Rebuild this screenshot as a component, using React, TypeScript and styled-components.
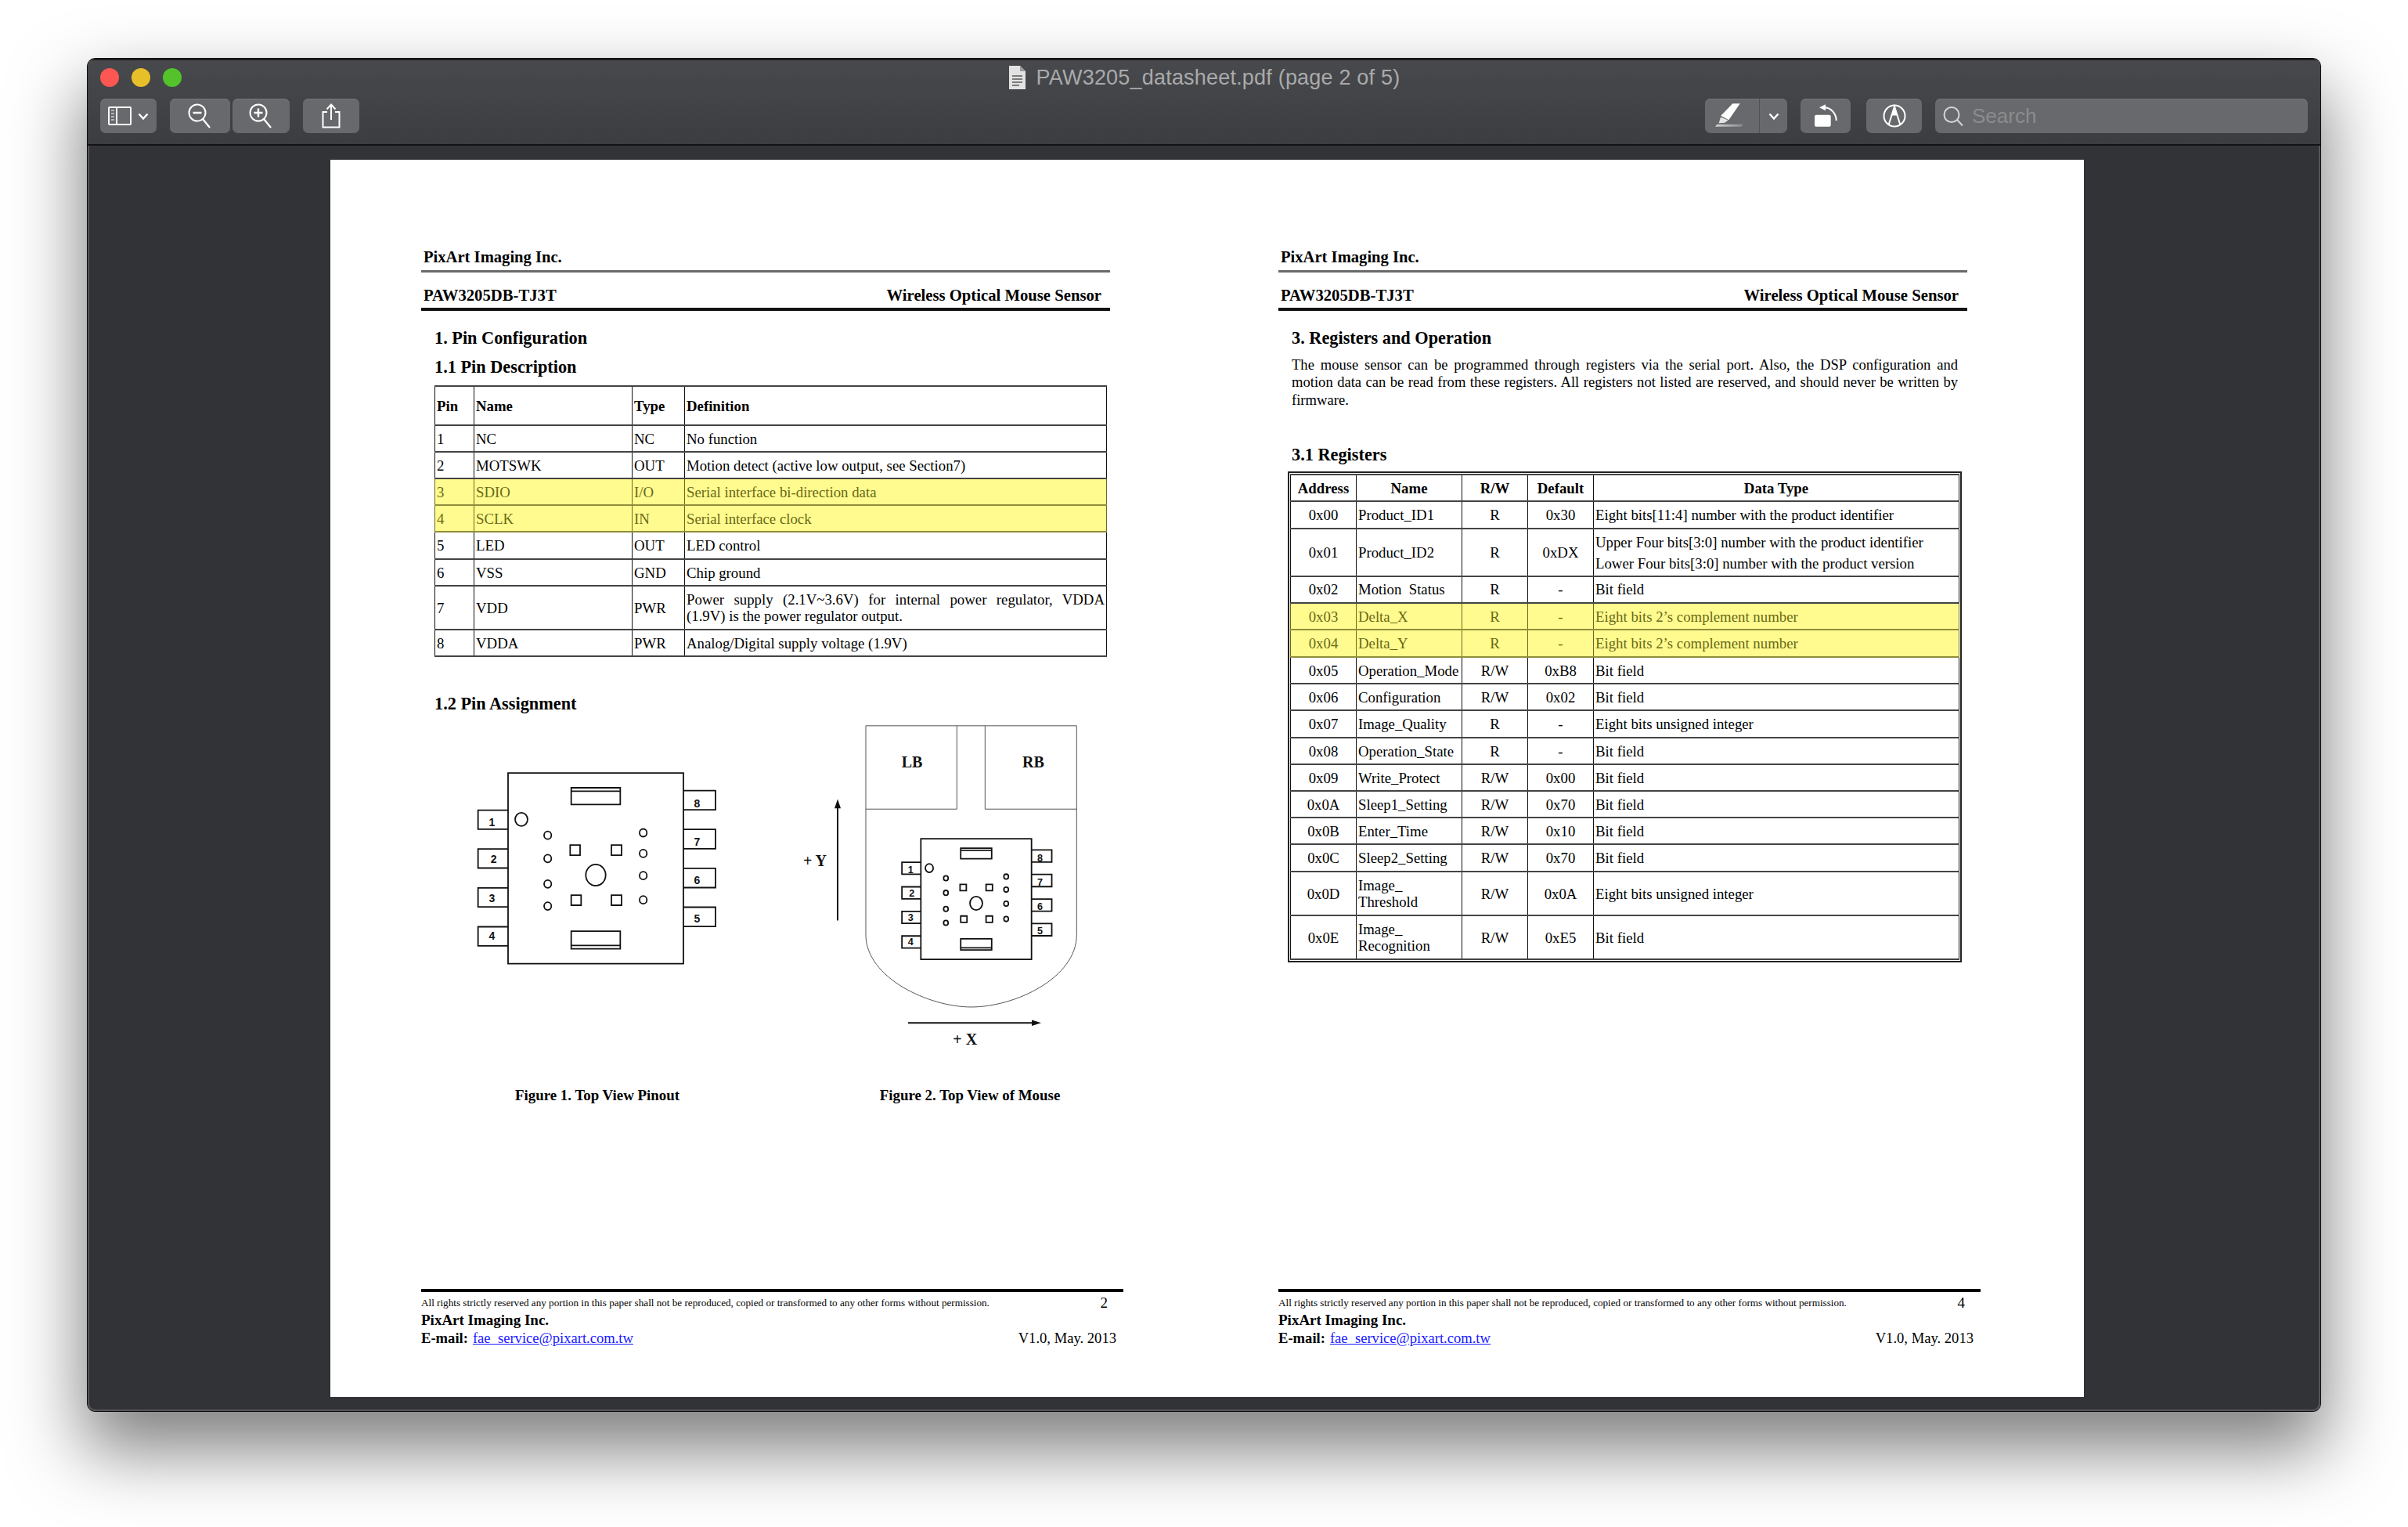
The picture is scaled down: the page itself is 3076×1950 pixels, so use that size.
import React from 'react'
import styled, { createGlobalStyle } from 'styled-components'

const GlobalStyle = createGlobalStyle`
  html, body { margin: 0; padding: 0; background: #fff; }
`

const Screen = styled.div`
  width: 3076px;
  height: 1950px;
  box-sizing: border-box;
  padding: 75px 112px 148px 112px;
  overflow: hidden;
  background: #fff;
`
const WindowShadow = styled.div`
  height: 100%;
  border-radius: 10px;
  box-shadow: 0 44px 90px 6px rgba(0, 0, 0, 0.5), 0 0 0 1px #111;
`
const Window = styled.div`
  height: 100%;
  display: flex;
  flex-direction: column;
  border-radius: 10px;
  overflow: hidden;
  background: #323337;
  box-shadow: inset 0 0 0 2px #55565a;
`
const Chrome = styled.div`
  height: 111px;
  box-sizing: border-box;
  flex: none;
  border-top: 2px solid #1c1c1e;
  border-bottom: 2px solid #141416;
  background: linear-gradient(#48494c, #3c3d40);
`
const TitleRow = styled.div`
  height: 49px;
  box-sizing: border-box;
  padding: 0 16px 5px;
  display: grid;
  grid-template-columns: 1fr auto 1fr;
  align-items: center;
`
const Lights = styled.div`
  display: flex;
  gap: 16px;
`
const Light = styled.span<{ $c: string }>`
  width: 24px;
  height: 24px;
  border-radius: 50%;
  background: ${p => p.$c};
`
const Title = styled.div`
  display: flex;
  align-items: center;
  gap: 13px;
  font: 27px "Liberation Sans", Arial, sans-serif;
  letter-spacing: 0.2px;
  color: #a9aaac;
`
const Toolbar = styled.div`
  height: 44px;
  padding: 0 16px;
  display: flex;
  align-items: center;
`
const ToolButton = styled.div<{ $w: number; $ml?: number }>`
  width: ${p => p.$w}px;
  height: 44px;
  margin-left: ${p => p.$ml ?? 0}px;
  display: flex;
  align-items: center;
  justify-content: center;
  gap: 8px;
  flex: none;
  border-radius: 7px;
  background: #68696c;
  box-shadow: inset 0 1px 0 #77787b;
`
const SplitPart = styled.div<{ $w: number; $divider?: boolean }>`
  width: ${p => p.$w}px;
  height: 100%;
  display: flex;
  align-items: center;
  justify-content: center;
  border-left: ${p => (p.$divider ? '1px solid #505154' : 'none')};
`
const Spacer = styled.div`
  flex: 1;
`
const SearchField = styled.div`
  width: 476px;
  height: 44px;
  margin-left: 17px;
  padding-left: 10px;
  box-sizing: border-box;
  display: flex;
  align-items: center;
  gap: 10px;
  border-radius: 7px;
  background: #68696c;
  box-shadow: inset 0 1px 0 #77787b;
  font: 26px "Liberation Sans", Arial, sans-serif;
  color: #8b8c8e;
`
const Viewer = styled.div`
  flex: 1;
  padding: 18px 302px 18px 310px;
  min-height: 0;
`
const Paper = styled.div`
  width: 2240px;
  height: 1580px;
  display: grid;
  grid-template-columns: 1120px 1120px;
  background: #fff;
  color: #000;
  font-family: "Liberation Serif", "Times New Roman", serif;
`
const Page = styled.div<{ $left: number }>`
  display: flex;
  flex-direction: column;
  box-sizing: border-box;
  height: 100%;
  padding: 112px 0 64px ${p => p.$left}px;
`
const RunningHead = styled.div`
  width: 880px;
`
const Company = styled.div`
  padding: 0 0 5px 3px;
  font-size: 20.6px;
  font-weight: bold;
  line-height: 24px;
  border-bottom: 3px solid #6a6a6a;
`
const Product = styled.div`
  display: flex;
  justify-content: space-between;
  padding: 17px 11px 4px 3px;
  font-size: 20.7px;
  font-weight: bold;
  line-height: 24px;
  border-bottom: 4px solid #111;
`
const Body = styled.div`
  padding-left: 17px;
`
const SectionTitle = styled.h2<{ $mt: number }>`
  margin: ${p => p.$mt}px 0 0;
  font-size: 22.3px;
  font-weight: bold;
  line-height: 26px;
`
const Paragraph = styled.div`
  width: 851px;
  margin: 10px 0 0;
  font-size: 18.6px;
  line-height: 22.4px;
`
const JustifiedLine = styled.div`
  text-align: justify;
  text-align-last: justify;
`
const DataTable = styled.table<{ $w: number; $mt?: number }>`
  width: ${p => p.$w}px;
  margin-top: ${p => p.$mt ?? 0}px;
  table-layout: fixed;
  border-collapse: collapse;
  font-size: 18.8px;
`
const Row = styled.tr<{ $h: number; $hl?: boolean }>`
  height: ${p => p.$h}px;
  background: ${p => (p.$hl ? '#fffb8e' : 'transparent')};
  color: ${p => (p.$hl ? '#6a6918' : '#000')};
`
const Cell = styled.td<{ $center?: boolean; $head?: boolean; $hl?: boolean; $lh?: number }>`
  padding: 0 2px;
  overflow: hidden;
  white-space: nowrap;
  border-top: 2px solid ${p => (p.$hl ? '#8f8d3c' : '#444')};
  border-bottom: 2px solid ${p => (p.$hl ? '#8f8d3c' : '#444')};
  border-left: 1px solid ${p => (p.$hl ? '#6b6a20' : '#111')};
  border-right: 1px solid ${p => (p.$hl ? '#6b6a20' : '#111')};
  text-align: ${p => (p.$center ? 'center' : 'left')};
  font-weight: ${p => (p.$head ? 'bold' : 'normal')};
  line-height: ${p => p.$lh ?? 21}px;
`
const ClippedCell = styled(Cell)`
  vertical-align: top;
`
const ClipText = styled.div`
  height: 17px;
  margin-top: 6px;
  line-height: 20px;
  overflow: hidden;
`
const RegisterFrame = styled.div`
  width: fit-content;
  margin: 8px 0 0 -5px;
  padding: 1px;
  border: 2px solid #222;
`
const FigureRow = styled.div`
  display: flex;
`
const Figure = styled.figure<{ $w: number }>`
  width: ${p => p.$w}px;
  margin: 0;
  text-align: center;
`
const FigureSvg = styled.svg`
  display: block;
  overflow: visible;
`
const Caption = styled.figcaption`
  font-size: 18.9px;
  font-weight: bold;
  line-height: 26px;
`
const Footer = styled.footer`
  width: 897px;
  margin-top: auto;
  padding-top: 3px;
  border-top: 4px solid #000;
`
const FooterRow = styled.div<{ $pr: number; $mt?: number }>`
  display: flex;
  justify-content: space-between;
  align-items: center;
  height: 22px;
  margin-top: ${p => p.$mt ?? 0}px;
  padding-right: ${p => p.$pr}px;
`
const Rights = styled.span`
  font-size: 13.15px;
`
const PageNumber = styled.span`
  font-size: 19px;
`
const FooterCompany = styled.span`
  font-size: 19px;
  font-weight: bold;
`
const FooterText = styled.span`
  font-size: 18.6px;
`
const FooterLabel = styled.b`
  margin-right: 6px;
`
const Mail = styled.a`
  color: #1a1aff;
  text-decoration: underline;
`

/* toolbar drawings */
const SidebarIcon = () => (
  <svg width="30" height="24" viewBox="0 0 30 24" fill="none">
    <rect x="1" y="1" width="28" height="22" rx="1" stroke="#fff" strokeWidth="2" />
    <path d="M11 1v22" stroke="#fff" strokeWidth="2" />
    <path d="M4 5h4M4 9h4M4 13h4M4 17h4" stroke="#b5b5b7" strokeWidth="2" />
  </svg>
)
const Chevron = () => (
  <svg width="14" height="9" viewBox="0 0 14 9" fill="none">
    <path d="M1.5 1.5 7 7.5l5.5-6" stroke="#fff" strokeWidth="2.4" />
  </svg>
)
const ZoomIcon = ({ plus }: { plus?: boolean }) => (
  <svg width="32" height="32" viewBox="0 0 32 32" fill="none">
    <circle cx="12" cy="12" r="10.5" stroke="#fff" strokeWidth="2" />
    <path d="m19 20 9 11" stroke="#fff" strokeWidth="2.2" />
    <path d={plus ? 'M6.5 12h11M12 6.5v11' : 'M6.5 12h11'} stroke="#fff" strokeWidth="2.4" />
  </svg>
)
const ShareIcon = () => (
  <svg width="24" height="32" viewBox="0 0 24 32" fill="none">
    <path d="M7 11H1.5v19.5h21V11H17" stroke="#fff" strokeWidth="2" />
    <path d="M12 21V2M6.5 7.5 12 1.5l5.500 6" stroke="#fff" strokeWidth="2" />
  </svg>
)
const PenIcon = () => (
  <svg width="36" height="32" viewBox="0 0 36 32" fill="none">
    <defs>
      <linearGradient id="penBase" x1="0" x2="1" y1="0" y2="0">
        <stop offset="0" stopColor="#d2d2d3" />
        <stop offset="1" stopColor="#87888a" />
      </linearGradient>
    </defs>
    <path d="M22.300 .3h9.400L17.300 21.300 7.300 15.800z" fill="#fff" />
    <path d="M7 17.500 4.700 25.300l7.600-.6 4.200-3.200z" fill="#e4e4e5" />
    <path d="M2.300 26.700h33.400l-2.400 3H0z" fill="url(#penBase)" />
  </svg>
)
const RotateIcon = () => (
  <svg width="30" height="32" viewBox="0 0 30 32" fill="none">
    <rect x="1" y="14.700" width="20.700" height="15" rx="2" fill="#fff" />
    <path d="M28.700 22C28.700 14 23 6 14 5.300" stroke="#fff" strokeWidth="2" />
    <path d="M7 5.300 15 1.300v8z" fill="#fff" />
  </svg>
)
const MarkupIcon = () => (
  <svg width="30" height="30" viewBox="0 0 30 30" fill="none">
    <circle cx="15" cy="15" r="13.500" stroke="#fff" strokeWidth="2" />
    <path d="M7.700 26 15 3l7.300 23" stroke="#fff" strokeWidth="2" />
    <path d="M15 3l-3.500 11.500h7z" fill="#fff" />
  </svg>
)
const SearchGlass = () => (
  <svg width="27" height="25" viewBox="0 0 27 25" fill="none">
    <circle cx="11" cy="10.500" r="9.500" stroke="#d4d4d5" strokeWidth="2" />
    <path d="m18 17 7 7.500" stroke="#d4d4d5" strokeWidth="2" />
  </svg>
)
const DocIcon = () => (
  <svg width="23" height="30" viewBox="0 0 23 30">
    <path d="M1 0h14l7 7v23H1z" fill="#e2e2e3" />
    <path d="M15 0v7h7z" fill="#9a9a9c" />
    <path d="M5 13h13M5 17h13M5 21h13M5 25h9" stroke="#5a5a5c" strokeWidth="1.500" />
  </svg>
)

/* chip drawing, coordinates in the space of the large pinout */
const line = { fill: 'none', stroke: '#111', strokeWidth: 1.8, vectorEffect: 'non-scaling-stroke' as const }
const leftPins: [number, number, number, number][] = [
  [430, 1, 205, 473],
  [569, 2, 212, 605],
  [708, 3, 205, 743],
  [847, 4, 205, 880],
]
const rightPins: [number, number, number, number][] = [
  [360, 8, 991, 406],
  [499, 7, 991, 543],
  [638, 6, 991, 680],
  [777, 5, 991, 818],
]
const holes = [
  [419, 520], [419, 603], [419, 694], [419, 773],
  [785, 511], [785, 585], [785, 664], [785, 751],
]
const pads = [
  [505, 555, 38, 36], [663, 555, 39, 36],
  [509, 734, 38, 36], [663, 734, 39, 36],
]
const PinLabel = styled.text<{ $size: number }>`
  font: bold ${p => p.$size}px "Liberation Sans", Arial, sans-serif;
  fill: #111;
  text-anchor: middle;
  dominant-baseline: central;
`
const FigureLabel = styled.text`
  font: bold 60px "Liberation Serif", "Times New Roman", serif;
  fill: #111;
  text-anchor: middle;
  dominant-baseline: central;
`
const ChipDrawing = ({ labelSize }: { labelSize: number }) => (
  <>
    <rect x="267" y="297" width="672" height="682" {...line} />
    {leftPins.map(([y, n, tx, ty]) => (
      <React.Fragment key={n}>
        <path d={`M267 ${y}H152V${y + 68}H267`} {...line} />
        <PinLabel x={tx} y={ty} $size={labelSize}>{n}</PinLabel>
      </React.Fragment>
    ))}
    {rightPins.map(([y, n, tx, ty]) => (
      <React.Fragment key={n}>
        <path d={`M939 ${y}H1062V${y + 69}H939`} {...line} />
        <PinLabel x={tx} y={ty} $size={labelSize}>{n}</PinLabel>
      </React.Fragment>
    ))}
    <rect x="509" y="350" width="188" height="60" {...line} />
    <path d="M509 362H697" {...line} />
    <rect x="509" y="863" width="188" height="63" {...line} />
    <path d="M509 914H697" {...line} />
    <circle cx="318" cy="463" r="24" {...line} />
    <circle cx="603" cy="662" r="38" {...line} />
    {holes.map(([cx, cy]) => (
      <circle key={`${cx}-${cy}`} cx={cx} cy={cy} r="14" {...line} />
    ))}
    {pads.map(([x, y, w, h]) => (
      <rect key={`${x}-${y}`} x={x} y={y} width={w} height={h} {...line} />
    ))}
  </>
)

const PinoutFigure = () => (
  <FigureSvg width="416" height="474" viewBox="0 0 416 474">
    <g transform="translate(5 -31) scale(.33333 .35714)">
      <ChipDrawing labelSize={42} />
    </g>
  </FigureSvg>
)

const thin = { fill: 'none', stroke: '#555', strokeWidth: 1, vectorEffect: 'non-scaling-stroke' as const }
const MouseFigure = () => (
  <FigureSvg width="536" height="474" viewBox="0 0 536 474">
    <g transform="translate(29 -11) scale(.33333 .34435)">
      <path d="M318 75V850C318 1010 560 1118 722 1118C890 1118 1126 1010 1126 850V75Z" {...thin} />
      <path d="M318 384H667V75M775 75V384H1126" {...thin} />
      <FigureLabel x="495" y="208">LB</FigureLabel>
      <FigureLabel x="960" y="208">RB</FigureLabel>
      <path d="M210 797V370" fill="none" stroke="#111" strokeWidth="6" />
      <path d="M210 347 222 381H198z" fill="#111" />
      <FigureLabel x="123" y="576">+ Y</FigureLabel>
      <path d="M480 1177H960" fill="none" stroke="#111" strokeWidth="6" />
      <path d="M990 1177 954 1166V1188z" fill="#111" />
      <FigureLabel x="698" y="1236">+ X</FigureLabel>
      <g transform="translate(529 494) scale(.63095 .65543) translate(-267 -297)">
        <ChipDrawing labelSize={60} />
      </g>
    </g>
  </FigureSvg>
)

const pinRows: { h: number; cells: string[]; hl?: boolean; wrap?: string[] }[] = [
  { h: 34, cells: ['1', 'NC', 'NC', 'No function'] },
  { h: 34, cells: ['2', 'MOTSWK', 'OUT', 'Motion detect (active low output, see Section7)'] },
  { h: 34, cells: ['3', 'SDIO', 'I/O', 'Serial interface bi-direction data'], hl: true },
  { h: 34, cells: ['4', 'SCLK', 'IN', 'Serial interface clock'], hl: true },
  { h: 35, cells: ['5', 'LED', 'OUT', 'LED control'] },
  { h: 34, cells: ['6', 'VSS', 'GND', 'Chip ground'] },
  {
    h: 56,
    cells: ['7', 'VDD', 'PWR', ''],
    wrap: ['Power supply (2.1V~3.6V) for internal power regulator, VDDA', '(1.9V) is the power regulator output.'],
  },
  { h: 34, cells: ['8', 'VDDA', 'PWR', 'Analog/Digital supply voltage (1.9V)'] },
]

type Register = {
  h: number
  addr: string
  name: React.ReactNode
  rw: string
  def: string
  type: React.ReactNode
  hl?: boolean
  clip?: boolean
  typeLh?: number
}
const registers: Register[] = [
  { h: 35, addr: '0x00', name: 'Product_ID1', rw: 'R', def: '0x30', type: 'Eight bits[11:4] number with the product identifier' },
  {
    h: 61, addr: '0x01', name: 'Product_ID2', rw: 'R', def: '0xDX', typeLh: 27,
    type: <>Upper Four bits[3:0] number with the product identifier<br />Lower Four bits[3:0] number with the product version</>,
  },
  { h: 34, addr: '0x02', name: 'Motion_Status', rw: 'R', def: '-', type: 'Bit field', clip: true },
  { h: 34, addr: '0x03', name: 'Delta_X', rw: 'R', def: '-', type: 'Eight bits 2’s complement number', hl: true },
  { h: 35, addr: '0x04', name: 'Delta_Y', rw: 'R', def: '-', type: 'Eight bits 2’s complement number', hl: true },
  { h: 34, addr: '0x05', name: 'Operation_Mode', rw: 'R/W', def: '0xB8', type: 'Bit field' },
  { h: 34, addr: '0x06', name: 'Configuration', rw: 'R/W', def: '0x02', type: 'Bit field' },
  { h: 35, addr: '0x07', name: 'Image_Quality', rw: 'R', def: '-', type: 'Eight bits unsigned integer' },
  { h: 34, addr: '0x08', name: 'Operation_State', rw: 'R', def: '-', type: 'Bit field' },
  { h: 34, addr: '0x09', name: 'Write_Protect', rw: 'R/W', def: '0x00', type: 'Bit field' },
  { h: 34, addr: '0x0A', name: 'Sleep1_Setting', rw: 'R/W', def: '0x70', type: 'Bit field' },
  { h: 34, addr: '0x0B', name: 'Enter_Time', rw: 'R/W', def: '0x10', type: 'Bit field' },
  { h: 35, addr: '0x0C', name: 'Sleep2_Setting', rw: 'R/W', def: '0x70', type: 'Bit field' },
  { h: 56, addr: '0x0D', name: <>Image_<br />Threshold</>, rw: 'R/W', def: '0x0A', type: 'Eight bits unsigned integer' },
  { h: 56, addr: '0x0E', name: <>Image_<br />Recognition</>, rw: 'R/W', def: '0xE5', type: 'Bit field' },
]

const PageHead = () => (
  <RunningHead>
    <Company>PixArt Imaging Inc.</Company>
    <Product>
      <span>PAW3205DB-TJ3T</span>
      <span>Wireless Optical Mouse Sensor</span>
    </Product>
  </RunningHead>
)

const PageFooter = ({ page }: { page: number }) => (
  <Footer>
    <FooterRow $pr={20}>
      <Rights>All rights strictly reserved any portion in this paper shall not be reproduced, copied or transformed to any other forms without permission.</Rights>
      <PageNumber>{page}</PageNumber>
    </FooterRow>
    <FooterRow $pr={0}>
      <FooterCompany>PixArt Imaging Inc.</FooterCompany>
    </FooterRow>
    <FooterRow $pr={9} $mt={1}>
      <FooterText>
        <FooterLabel>E-mail:</FooterLabel>
        <Mail href="#">fae_service@pixart.com.tw</Mail>
      </FooterText>
      <FooterText>V1.0, May. 2013</FooterText>
    </FooterRow>
  </Footer>
)

const PinTable = () => (
  <DataTable $w={858} $mt={10}>
    <colgroup>
      <col width="50" />
      <col width="202" />
      <col width="67" />
      <col width="539" />
    </colgroup>
    <tbody>
      <Row $h={50}>
        {['Pin', 'Name', 'Type', 'Definition'].map(t => (
          <Cell key={t} $head>{t}</Cell>
        ))}
      </Row>
      {pinRows.map(r => (
        <Row key={r.cells[0]} $h={r.h} $hl={r.hl}>
          <Cell $hl={r.hl}>{r.cells[0]}</Cell>
          <Cell $hl={r.hl}>{r.cells[1]}</Cell>
          <Cell $hl={r.hl}>{r.cells[2]}</Cell>
          <Cell $hl={r.hl}>
            {r.wrap ? (
              <>
                <JustifiedLine>{r.wrap[0]}</JustifiedLine>
                {r.wrap[1]}
              </>
            ) : (
              r.cells[3]
            )}
          </Cell>
        </Row>
      ))}
    </tbody>
  </DataTable>
)

const RegisterTable = () => (
  <RegisterFrame>
    <DataTable $w={854}>
      <colgroup>
        <col width="84" />
        <col width="135" />
        <col width="84" />
        <col width="84" />
        <col width="467" />
      </colgroup>
      <tbody>
        <Row $h={34}>
          {['Address', 'Name', 'R/W', 'Default', 'Data Type'].map(t => (
            <Cell key={t} $head $center>{t}</Cell>
          ))}
        </Row>
        {registers.map(r => {
          const Base = r.clip ? ClippedCell : Cell
          const text = (v: React.ReactNode) => (r.clip ? <ClipText>{v}</ClipText> : v)
          return (
            <Row key={r.addr} $h={r.h} $hl={r.hl}>
              <Base $center $hl={r.hl}>{text(r.addr)}</Base>
              <Base $hl={r.hl}>{text(r.name)}</Base>
              <Base $center $hl={r.hl}>{text(r.rw)}</Base>
              <Base $center $hl={r.hl}>{text(r.def)}</Base>
              <Base $hl={r.hl} $lh={r.typeLh}>{text(r.type)}</Base>
            </Row>
          )
        })}
      </tbody>
    </DataTable>
  </RegisterFrame>
)

const App: React.FC = () => (
  <Screen>
    <GlobalStyle />
    <WindowShadow>
      <Window>
        <Chrome>
          <TitleRow>
            <Lights>
              <Light $c="#fc5753" />
              <Light $c="#e6bf29" />
              <Light $c="#53c22b" />
            </Lights>
            <Title>
              <DocIcon />
              PAW3205_datasheet.pdf (page 2 of 5)
            </Title>
          </TitleRow>
          <Toolbar>
            <ToolButton $w={72}>
              <SidebarIcon />
              <Chevron />
            </ToolButton>
            <ToolButton $w={77} $ml={17}><ZoomIcon /></ToolButton>
            <ToolButton $w={73} $ml={3}><ZoomIcon plus /></ToolButton>
            <ToolButton $w={72} $ml={17}><ShareIcon /></ToolButton>
            <Spacer />
            <ToolButton $w={105}>
              <SplitPart $w={67}><PenIcon /></SplitPart>
              <SplitPart $w={38} $divider><Chevron /></SplitPart>
            </ToolButton>
            <ToolButton $w={64} $ml={17}><RotateIcon /></ToolButton>
            <ToolButton $w={71} $ml={20}><MarkupIcon /></ToolButton>
            <SearchField>
              <SearchGlass />
              Search
            </SearchField>
          </Toolbar>
        </Chrome>
        <Viewer>
          <Paper>
            <Page $left={116}>
              <PageHead />
              <Body>
                <SectionTitle $mt={22}>1. Pin Configuration</SectionTitle>
                <SectionTitle $mt={11}>1.1 Pin Description</SectionTitle>
                <PinTable />
                <SectionTitle $mt={47}>1.2 Pin Assignment</SectionTitle>
                <FigureRow>
                  <Figure $w={416}>
                    <PinoutFigure />
                    <Caption>Figure 1. Top View Pinout</Caption>
                  </Figure>
                  <Figure $w={536}>
                    <MouseFigure />
                    <Caption>Figure 2. Top View of Mouse</Caption>
                  </Figure>
                </FigureRow>
              </Body>
              <PageFooter page={2} />
            </Page>
            <Page $left={91}>
              <PageHead />
              <Body>
                <SectionTitle $mt={22}>3. Registers and Operation</SectionTitle>
                <Paragraph>
                  <JustifiedLine>The mouse sensor can be programmed through registers via the serial port. Also, the DSP configuration and</JustifiedLine>
                  <JustifiedLine>motion data can be read from these registers. All registers not listed are reserved, and should never be written by</JustifiedLine>
                  firmware.
                </Paragraph>
                <SectionTitle $mt={46}>3.1 Registers</SectionTitle>
                <RegisterTable />
              </Body>
              <PageFooter page={4} />
            </Page>
          </Paper>
        </Viewer>
      </Window>
    </WindowShadow>
  </Screen>
)

export default App
